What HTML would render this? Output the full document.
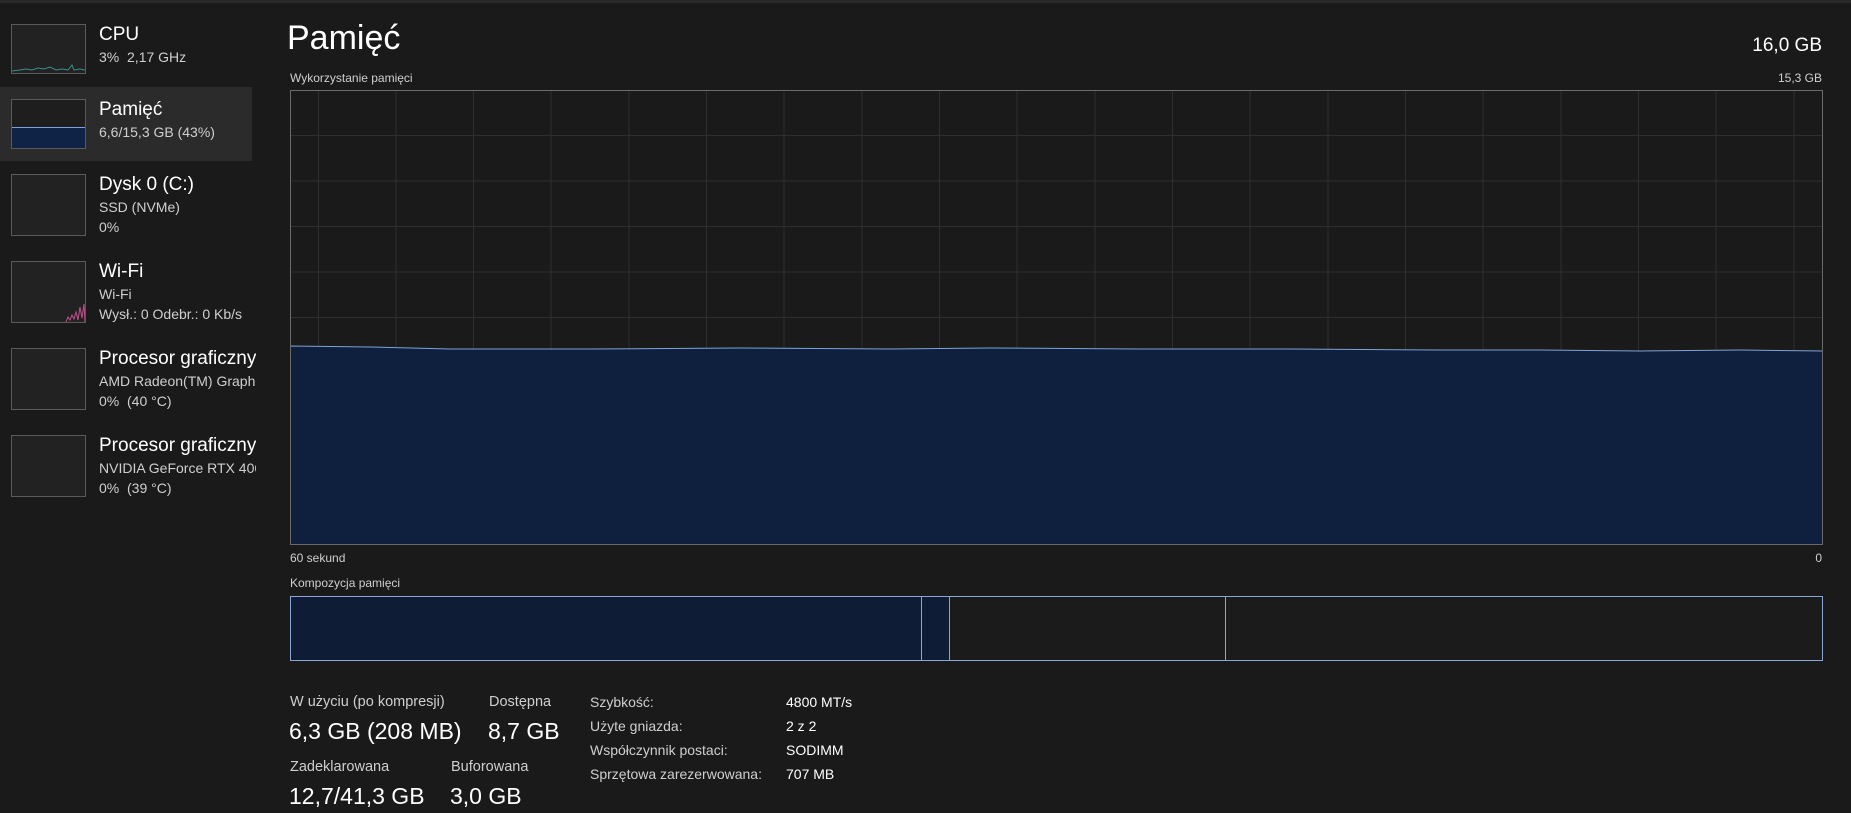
<!DOCTYPE html>
<html><head><meta charset="utf-8"><style>
*{margin:0;padding:0;box-sizing:border-box}
body{width:1851px;height:813px;background:#1a1a1a;color:#fff;font-family:"Segoe UI","Liberation Sans",sans-serif;position:relative;overflow:hidden}
.a{position:absolute;white-space:nowrap}
.topline{position:absolute;left:0;top:0;width:1851px;height:3px;background:#2a2a2a}
.sel{position:absolute;left:0;top:87px;width:252px;height:74px;background:#2b2b2b}
.th{position:absolute;left:11px;width:75px;border:1px solid #5a5a5a;background:#222}
.t1{font-size:19px;color:#fff;left:99px}
.t2{font-size:14px;color:#cfcfcf;left:99px}
.lbl{font-size:12px;color:#cfcfcf}
.sl{font-size:15px;color:#cfcfcf}
.sv{font-size:23px;color:#fff}
</style></head><body>
<div class="topline"></div>
<div class="sel"></div>

<div class="th" style="top:24px;height:50px"><svg width="73" height="48" style="position:absolute;left:0;top:0"><polyline points="0,46 8,45 14,44 20,45 26,43 32,44 38,42 44,45 50,44 56,45 60,40 62,45 68,44 73,45" fill="none" stroke="#3a8f8a" stroke-width="1"/></svg></div>
<div class="a t1" style="top:24px">CPU</div>
<div class="a t2" style="top:49px">3%&nbsp; 2,17 GHz</div>

<div class="th" style="top:99px;height:50px;background:#1e1e1e"><div style="position:absolute;left:0;right:0;top:27px;bottom:0;background:#0f2346;border-top:1px solid #7fa2d6"></div></div>
<div class="a t1" style="top:99px">Pamięć</div>
<div class="a t2" style="top:124px">6,6/15,3 GB (43%)</div>

<div class="th" style="top:174px;height:62px"></div>
<div class="a t1" style="top:174px">Dysk 0 (C:)</div>
<div class="a t2" style="top:199px">SSD (NVMe)</div>
<div class="a t2" style="top:219px">0%</div>

<div class="th" style="top:261px;height:62px"><svg width="73" height="60" style="position:absolute;left:0;top:0"><polyline points="54,60 56,55 58,58 60,53 62,57 64,50 66,58 68,45 70,56 72,42 73,60" fill="none" stroke="#c0508a" stroke-width="1"/></svg></div>
<div class="a t1" style="top:261px">Wi-Fi</div>
<div class="a t2" style="top:286px">Wi-Fi</div>
<div class="a t2" style="top:306px">Wysł.: 0 Odebr.: 0 Kb/s</div>

<div class="th" style="top:348px;height:62px"></div>
<div class="a t1" style="top:348px;width:157px;overflow:hidden">Procesor graficzny 0</div>
<div class="a t2" style="top:373px;width:157px;overflow:hidden">AMD Radeon(TM) Graphics</div>
<div class="a t2" style="top:393px">0%&nbsp; (40 °C)</div>

<div class="th" style="top:435px;height:62px"></div>
<div class="a t1" style="top:435px;width:157px;overflow:hidden">Procesor graficzny 1</div>
<div class="a t2" style="top:460px;width:157px;overflow:hidden">NVIDIA GeForce RTX 4060</div>
<div class="a t2" style="top:480px">0%&nbsp; (39 °C)</div>

<div class="a" style="left:287px;top:19px;font-size:34px;font-weight:300">Pamięć</div>
<div class="a" style="right:29px;top:35px;font-size:19px">16,0 GB</div>
<div class="a lbl" style="left:290px;top:71px">Wykorzystanie pamięci</div>
<div class="a lbl" style="right:29px;top:71px">15,3 GB</div>

<svg class="a" style="left:290px;top:90px" width="1533" height="455">
<g stroke="#2e2e2e" stroke-width="1">
<line x1="0" y1="45.5" x2="1533" y2="45.5"/><line x1="0" y1="91" x2="1533" y2="91"/><line x1="0" y1="136.5" x2="1533" y2="136.5"/><line x1="0" y1="182" x2="1533" y2="182"/><line x1="0" y1="227.5" x2="1533" y2="227.5"/><line x1="0" y1="273" x2="1533" y2="273"/><line x1="0" y1="318.5" x2="1533" y2="318.5"/><line x1="0" y1="364" x2="1533" y2="364"/><line x1="0" y1="409.5" x2="1533" y2="409.5"/>
<line x1="28.5" y1="0" x2="28.5" y2="455"/><line x1="106" y1="0" x2="106" y2="455"/><line x1="183.5" y1="0" x2="183.5" y2="455"/><line x1="261" y1="0" x2="261" y2="455"/><line x1="339" y1="0" x2="339" y2="455"/><line x1="416.5" y1="0" x2="416.5" y2="455"/><line x1="494" y1="0" x2="494" y2="455"/><line x1="572" y1="0" x2="572" y2="455"/><line x1="649.5" y1="0" x2="649.5" y2="455"/><line x1="727" y1="0" x2="727" y2="455"/><line x1="805" y1="0" x2="805" y2="455"/><line x1="882.5" y1="0" x2="882.5" y2="455"/><line x1="960" y1="0" x2="960" y2="455"/><line x1="1038" y1="0" x2="1038" y2="455"/><line x1="1115.5" y1="0" x2="1115.5" y2="455"/><line x1="1193" y1="0" x2="1193" y2="455"/><line x1="1271" y1="0" x2="1271" y2="455"/><line x1="1348.5" y1="0" x2="1348.5" y2="455"/><line x1="1426" y1="0" x2="1426" y2="455"/><line x1="1504" y1="0" x2="1504" y2="455"/>
</g>
<path d="M0,256 L80,257 L160,259 L300,259 L450,258 L600,259 L700,258 L850,259 L1000,259 L1150,260 L1250,260 L1350,261 L1450,260 L1533,261 L1533,455 L0,455 Z" fill="#0f1f3e" stroke="#7ea3d4" stroke-width="1"/>
<rect x="0.5" y="0.5" width="1532" height="454" fill="none" stroke="#6a6a6a"/>
</svg>
<div class="a lbl" style="left:290px;top:551px">60 sekund</div>
<div class="a lbl" style="right:29px;top:551px">0</div>
<div class="a lbl" style="left:290px;top:576px">Kompozycja pamięci</div>

<div class="a" style="left:290px;top:596px;width:1533px;height:65px;border:1px solid #8aa6d2;background:#1b1b1b">
<div style="position:absolute;left:0;top:0;width:631px;height:100%;background:#0f1c36;border-right:1px solid #8aa6d2"></div>
<div style="position:absolute;left:631px;top:0;width:28px;height:100%;background:#0f1c36;border-right:1px solid #8aa6d2"></div>
<div style="position:absolute;left:934px;top:0;width:1px;height:100%;background:#8aa6d2"></div>
</div>

<div class="a sl" style="left:290px;top:694px;font-size:14.5px">W użyciu (po kompresji)</div>
<div class="a sv" style="left:289px;top:718px">6,3 GB (208 MB)</div>
<div class="a sl" style="left:489px;top:694px;font-size:14.5px">Dostępna</div>
<div class="a sv" style="left:488px;top:718px">8,7 GB</div>
<div class="a sl" style="left:290px;top:759px;font-size:14.5px">Zadeklarowana</div>
<div class="a sv" style="left:289px;top:783px">12,7/41,3 GB</div>
<div class="a sl" style="left:451px;top:759px;font-size:14.5px">Buforowana</div>
<div class="a sv" style="left:450px;top:783px">3,0 GB</div>

<div class="a sl" style="left:590px;top:694px;font-size:14px">Szybkość:</div>
<div class="a sl" style="left:786px;top:694px;font-size:14px;color:#fff">4800 MT/s</div>
<div class="a sl" style="left:590px;top:718px;font-size:14px">Użyte gniazda:</div>
<div class="a sl" style="left:786px;top:718px;font-size:14px;color:#fff">2 z 2</div>
<div class="a sl" style="left:590px;top:742px;font-size:14px">Współczynnik postaci:</div>
<div class="a sl" style="left:786px;top:742px;font-size:14px;color:#fff">SODIMM</div>
<div class="a sl" style="left:590px;top:766px;font-size:14px">Sprzętowa zarezerwowana:</div>
<div class="a sl" style="left:786px;top:766px;font-size:14px;color:#fff">707 MB</div>
</body></html>
